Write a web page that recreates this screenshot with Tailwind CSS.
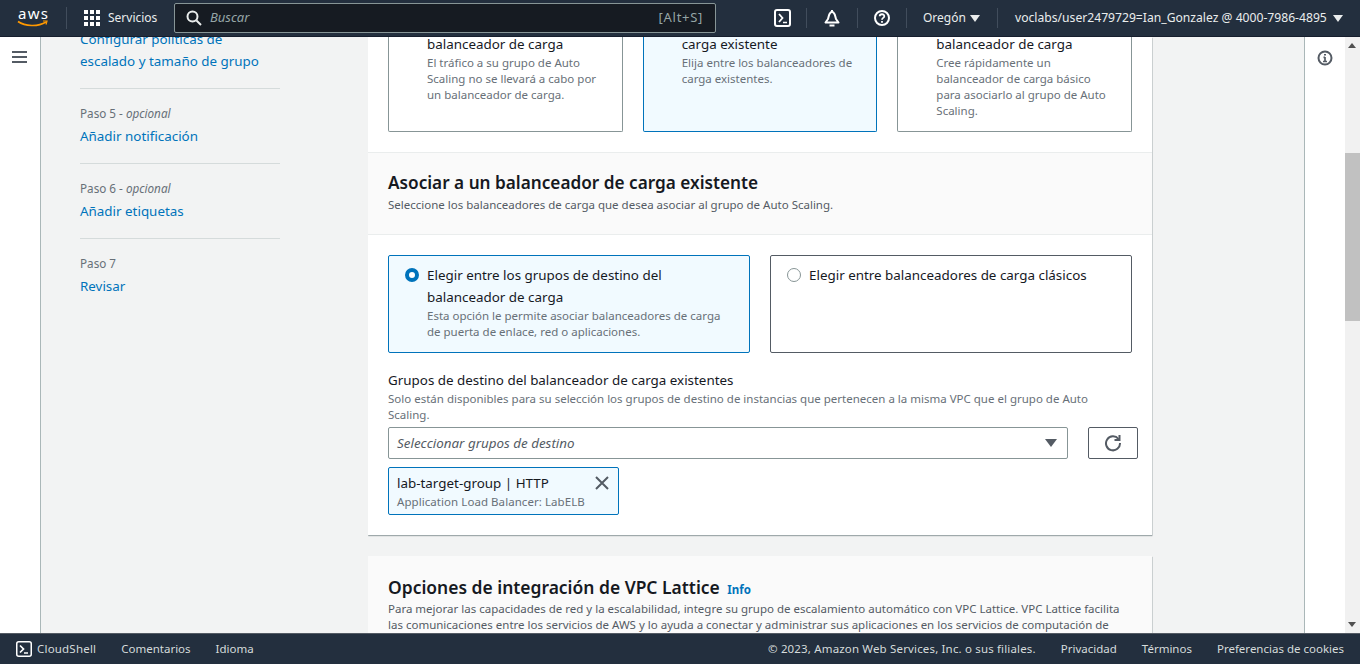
<!doctype html>
<html lang="es">
<head>
<meta charset="utf-8">
<script src="https://cdn.jsdelivr.net/npm/@tailwindcss/browser@4"></script>
</head>
<body class="m-0 overflow-hidden">
<div class="w-[1360px] h-[664px] flex flex-col overflow-hidden bg-[#f2f3f3] text-[#16191f] font-['Noto_Sans',sans-serif]">
  <header class="h-[37px] shrink-0 bg-[#232f3e] flex items-center text-[#eaeded] text-[12px] border-b border-[#161e2d]">
    <div class="w-[66px] h-full flex justify-center items-center shrink-0">
      <svg width="32" height="20" viewBox="0 0 32 20" class="mt-[-2px]">
        <text x="1" y="12" font-size="15" fill="#ffffff" font-family="Noto Sans" textLength="30">aws</text>
        <path d="M1 14.5 C8 19.5 21 20 29 15" stroke="#ff9900" stroke-width="1.6" fill="none"/>
        <path d="M26 14 L30 14 L29 17.5" stroke="#ff9900" stroke-width="1.2" fill="none"/>
      </svg>
    </div>
    <div class="w-px h-[22px] bg-[#414d5c]"></div>
    <div class="ml-[17px] grid grid-cols-3 gap-[2px] w-[16px] h-[16px]">
      <i class="bg-white w-[4px] h-[4px]"></i><i class="bg-white w-[4px] h-[4px]"></i><i class="bg-white w-[4px] h-[4px]"></i>
      <i class="bg-white w-[4px] h-[4px]"></i><i class="bg-white w-[4px] h-[4px]"></i><i class="bg-white w-[4px] h-[4px]"></i>
      <i class="bg-white w-[4px] h-[4px]"></i><i class="bg-white w-[4px] h-[4px]"></i><i class="bg-white w-[4px] h-[4px]"></i>
    </div>
    <span class="ml-[8px] w-[66px] text-[#eaeded]">Servicios</span>
    <div class="w-[542px] h-[30px] bg-[#161b22] border border-[#879596] rounded-[2px] flex items-center pl-[11px] pr-[12px]">
      <svg width="16" height="16" viewBox="0 0 16 16" fill="none" stroke="#eaeded" stroke-width="2"><circle cx="6.5" cy="6.5" r="5"/><path d="M10.5 10.5 L15 15"/></svg>
      <span class="ml-[8px] text-[13px] italic text-[#95a5a6] flex-1">Buscar</span>
      <span class="text-[13px] tracking-[0.7px] text-[#95a5a6]">[Alt+S]</span>
    </div>
    <div class="ml-[42px] w-[49px] flex justify-center border-r border-[#414d5c] h-[20px] items-center">
      <svg width="17" height="18" viewBox="0 0 17 18" fill="none" stroke="#ffffff" stroke-width="2"><rect x="1" y="1" width="15" height="16" rx="2"/><path d="M5 5 L8.5 9 L5 13" stroke-width="1.8"/><path d="M9 13.5 H13" stroke-width="1.5"/></svg>
    </div>
    <div class="w-[51px] flex justify-center border-r border-[#414d5c] h-[20px] items-center">
      <svg width="16" height="18" viewBox="0 0 16 18" fill="none" stroke="#ffffff" stroke-width="2"><path d="M8 1 V3 M8 3 C5 3 5 7 4 10 L1.5 13.5 H14.5 L12 10 C11 7 11 3 8 3 Z" stroke-linejoin="round"/><path d="M5.5 16.5 H10.5"/></svg>
    </div>
    <div class="w-[49px] flex justify-center border-r border-[#414d5c] h-[20px] items-center">
      <svg width="16" height="16" viewBox="0 0 16 16" fill="none" stroke="#ffffff" stroke-width="2"><circle cx="8" cy="8" r="7"/><path d="M5.7 6.3 C5.7 3.6 10.3 3.6 10.3 6.2 C10.3 8 8 7.8 8 9.8" stroke-width="1.8"/><path d="M8 11 V12.8" stroke-width="1.8"/></svg>
    </div>
    <span class="ml-[16px] w-[42px] whitespace-nowrap">Oregón</span>
    <span class="ml-[5px] w-0 h-0 border-l-[5px] border-r-[5px] border-t-[7px] border-l-transparent border-r-transparent border-t-[#eaeded]"></span>
    <div class="ml-[17px] w-px h-[20px] bg-[#414d5c]"></div>
    <span class="ml-[17px] text-[12.15px] whitespace-nowrap">voclabs/user2479729=Ian_Gonzalez @ 4000-7986-4895</span>
    <span class="ml-[6px] w-0 h-0 border-l-[5px] border-r-[5px] border-t-[7px] border-l-transparent border-r-transparent border-t-[#eaeded]"></span>
  </header>

  <div class="flex-1 min-h-0 flex overflow-hidden">
    <div class="w-[41px] shrink-0 bg-white border-r border-[#aab7b8] pt-[14px] pl-[12px]">
      <div class="w-[15px] flex flex-col gap-[3px]">
        <i class="block h-[2px] bg-[#545b64]"></i><i class="block h-[2px] bg-[#545b64]"></i><i class="block h-[2px] bg-[#545b64]"></i>
      </div>
    </div>

    <main class="flex-1 min-w-0 flex overflow-hidden">
      <nav class="w-[327px] shrink-0 pl-[39px]">
        <div class="w-[200px] mt-[-9px] text-[13.4px] leading-[22px] text-[#0073bb]">
          <p>Configurar políticas de escalado y tamaño de grupo</p>
          <div class="mt-[16px] border-t border-[#d5dbdb] pt-[16px]">
            <p class="text-[11.7px] leading-[17px] text-[#687078]">Paso 5 - <em>opcional</em></p>
            <p class="mt-[3px]">Añadir notificación</p>
          </div>
          <div class="mt-[16px] border-t border-[#d5dbdb] pt-[16px]">
            <p class="text-[11.7px] leading-[17px] text-[#687078]">Paso 6 - <em>opcional</em></p>
            <p class="mt-[3px]">Añadir etiquetas</p>
          </div>
          <div class="mt-[16px] border-t border-[#d5dbdb] pt-[16px]">
            <p class="text-[11.7px] leading-[17px] text-[#687078]">Paso 7</p>
            <p class="mt-[3px]">Revisar</p>
          </div>
        </div>
      </nav>

      <div class="w-[785px] shrink-0 h-full overflow-hidden pr-px">
        <section class="bg-white shadow-[0_1px_1px_0_rgba(0,28,36,0.25),1px_1px_1px_0_rgba(0,28,36,0.12)]">
          <div class="px-[20px] grid grid-cols-3 gap-[20px] h-[115px]">
            <div class="h-[95px] border border-t-0 border-[#879596] rounded-b-[2px] pl-[38px] pr-[14px]">
              <p class="text-[13.4px] leading-[14px]">balanceador de carga</p>
              <p class="mt-[4px] text-[11.5px] leading-[16px] text-[#687078]">El tráfico a su grupo de Auto Scaling no se llevará a cabo por un balanceador de carga.</p>
            </div>
            <div class="h-[95px] border border-t-0 border-[#0073bb] bg-[#f1faff] rounded-b-[2px] pl-[38px] pr-[14px]">
              <p class="text-[13.4px] leading-[14px]">carga existente</p>
              <p class="mt-[4px] text-[11.5px] leading-[16px] text-[#687078]">Elija entre los balanceadores de carga existentes.</p>
            </div>
            <div class="h-[95px] border border-t-0 border-[#879596] rounded-b-[2px] pl-[38px] pr-[22px]">
              <p class="text-[13.4px] leading-[14px]">balanceador de carga</p>
              <p class="mt-[4px] text-[11.5px] leading-[16px] text-[#687078]">Cree rápidamente un balanceador de carga básico para asociarlo al grupo de Auto Scaling.</p>
            </div>
          </div>
          <div class="h-[83px] bg-[#fafafa] border-y border-[#eaeded] px-[20px] pt-[19px]">
            <h2 class="text-[17.2px] leading-[22px] font-semibold">Asociar a un balanceador de carga existente</h2>
            <p class="mt-[3px] text-[11.5px] leading-[16px] text-[#545b64]">Seleccione los balanceadores de carga que desea asociar al grupo de Auto Scaling.</p>
          </div>
          <div class="px-[20px] pt-[20px] h-[300px]">
            <div class="grid grid-cols-2 gap-[20px]">
              <div class="h-[98px] border border-[#0073bb] bg-[#f1faff] rounded-[2px] flex pl-[16px] pr-[14px] pt-[8px]">
                <span class="mt-[4px] w-[14px] h-[14px] rounded-full border-[4px] border-[#0073bb] bg-white shrink-0"></span>
                <div class="ml-[8px]">
                  <p class="text-[13.4px] leading-[22px]">Elegir entre los grupos de destino del balanceador de carga</p>
                  <p class="text-[11.5px] leading-[16px] text-[#687078]">Esta opción le permite asociar balanceadores de carga de puerta de enlace, red o aplicaciones.</p>
                </div>
              </div>
              <div class="h-[98px] border border-[#545b64] rounded-[2px] flex pl-[16px] pr-[14px] pt-[8px]">
                <span class="mt-[4px] w-[14px] h-[14px] rounded-full border border-[#879596] bg-white shrink-0"></span>
                <p class="ml-[8px] text-[13.4px] leading-[22px]">Elegir entre balanceadores de carga clásicos</p>
              </div>
            </div>
            <p class="mt-[17px] text-[13.4px] leading-[20px]">Grupos de destino del balanceador de carga existentes</p>
            <p class="mt-[1px] text-[11.5px] leading-[16px] text-[#687078]">Solo están disponibles para su selección los grupos de destino de instancias que pertenecen a la misma VPC que el grupo de Auto Scaling.</p>
            <div class="mt-[4px] flex w-[750px]">
              <div class="w-[680px] h-[32px] shrink-0 border border-[#879596] rounded-[2px] flex items-center justify-between pl-[8px] pr-[10px]">
                <span class="text-[13.4px] italic text-[#545b64]">Seleccionar grupos de destino</span>
                <span class="w-0 h-0 border-l-[6px] border-r-[6px] border-t-[8px] border-l-transparent border-r-transparent border-t-[#545b64]"></span>
              </div>
              <div class="ml-[20px] w-[50px] h-[32px] shrink-0 border border-[#545b64] rounded-[2px] flex items-center justify-center">
                <svg width="18" height="18" viewBox="0 0 18 18" fill="none" stroke="#545b64" stroke-width="2"><path d="M14.5 5 A7 7 0 1 0 16 9"/><path d="M15.5 1 V6 H10.5" fill="none"/></svg>
              </div>
            </div>
            <div class="mt-[8px] w-[231px] h-[48px] border border-[#0073bb] bg-[#f1faff] rounded-[2px] pl-[8px] pr-[8px] pt-[5px] relative">
              <p class="text-[13.4px] leading-[20px]">lab-target-group | HTTP</p>
              <p class="mt-px text-[11.5px] tracking-[0.06px] leading-[16px] text-[#687078]">Application Load Balancer: LabELB</p>
              <svg class="absolute right-[9px] top-[8px]" width="14" height="14" viewBox="0 0 14 14" stroke="#545b64" stroke-width="2" fill="none"><path d="M1 1 L13 13 M13 1 L1 13"/></svg>
            </div>
          </div>
        </section>
        <section class="mt-[21px] bg-[#fafafa] px-[20px] pt-[20px] shadow-[0_1px_1px_0_rgba(0,28,36,0.25),1px_1px_1px_0_rgba(0,28,36,0.12)] h-[120px]">
          <h2 class="text-[17.45px] leading-[22px] font-semibold">Opciones de integración de VPC Lattice <a class="ml-[3px] text-[11.5px] font-bold text-[#0073bb]">Info</a></h2>
          <p class="text-[11.5px] leading-[16px] text-[#545b64]">Para mejorar las capacidades de red y la escalabilidad, integre su grupo de escalamiento automático con VPC Lattice. VPC Lattice facilita las comunicaciones entre los servicios de AWS y lo ayuda a conectar y administrar sus aplicaciones en los servicios de computación de</p>
        </section>
      </div>

      <div class="flex-1"></div>
    </main>

    <aside class="w-[41px] shrink-0 bg-white border-l border-[#aab7b8] flex justify-center pt-[13px]">
      <svg width="16" height="16" viewBox="0 0 16 16" fill="none"><circle cx="8" cy="8" r="6.5" stroke="#545b64" stroke-width="2"/><path d="M8 7 V11.5 M6 11.5 H10 M6.5 7.3 H8" stroke="#545b64" stroke-width="1.7"/><path d="M8 4 V5.6" stroke="#545b64" stroke-width="2"/></svg>
    </aside>
    <div class="w-[15px] shrink-0 bg-[#f1f1f1] relative">
      <span class="absolute left-[3px] top-[6px] w-0 h-0 border-l-[4px] border-r-[4px] border-b-[5px] border-l-transparent border-r-transparent border-b-[#505050]"></span>
      <div class="absolute left-0 top-[116px] w-[15px] h-[168px] bg-[#c1c1c1]"></div>
      <span class="absolute left-[3px] bottom-[6px] w-0 h-0 border-l-[4px] border-r-[4px] border-t-[5px] border-l-transparent border-r-transparent border-t-[#505050]"></span>
    </div>
  </div>

  <footer class="h-[31px] shrink-0 bg-[#232f3e] border-t border-[#545b64] flex items-center text-[11.5px] text-[#d5dbdb] pl-[16px] pr-[16px]">
    <svg width="16" height="16" viewBox="0 0 16 16" fill="none" stroke="#ffffff"><rect x="0.75" y="0.75" width="14.5" height="14.5" rx="2" stroke-width="1.5"/><path d="M4 4.5 L7.5 8 L4 11.5" stroke-width="1.7"/><path d="M8 12 H12" stroke-width="1.5"/></svg>
    <span class="ml-[5px] tracking-[0.2px]">CloudShell</span>
    <span class="ml-[25px]">Comentarios</span>
    <span class="ml-[25px]">Idioma</span>
    <span class="ml-auto tracking-[0.16px]">© 2023, Amazon Web Services, Inc. o sus filiales.</span>
    <span class="ml-[25px]">Privacidad</span>
    <span class="ml-[25px]">Términos</span>
    <span class="ml-[25px]">Preferencias de cookies</span>
  </footer>
</div>
</body>
</html>
